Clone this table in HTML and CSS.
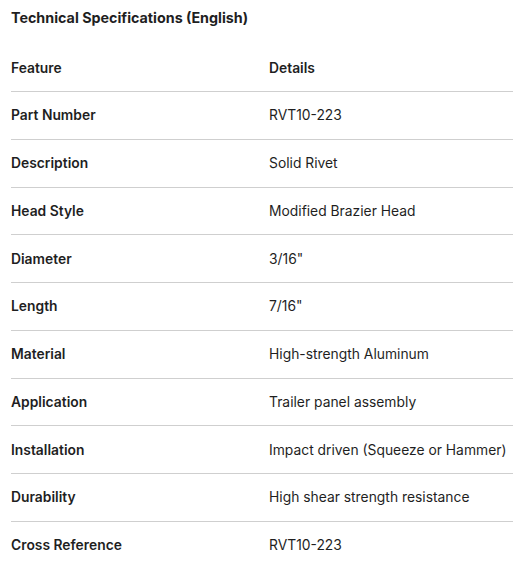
FILE: index.html
```html
<!DOCTYPE html>
<html lang="en">
<head>
<meta charset="utf-8">
<title>Technical Specifications</title>
<link rel="stylesheet" href="styles.css">
</head>
<body>
<div class="spec">
  <h2 class="spec-title">Technical Specifications (English)</h2>
  <table class="spec-table">
    <thead>
      <tr><th class="col-feature">Feature</th><th>Details</th></tr>
    </thead>
    <tbody>
      <tr><td class="feat">Part Number</td><td>RVT10-223</td></tr>
      <tr><td class="feat">Description</td><td>Solid Rivet</td></tr>
      <tr><td class="feat">Head Style</td><td>Modified Brazier Head</td></tr>
      <tr><td class="feat">Diameter</td><td>3/16"</td></tr>
      <tr><td class="feat">Length</td><td>7/16"</td></tr>
      <tr><td class="feat">Material</td><td>High-strength Aluminum</td></tr>
      <tr><td class="feat">Application</td><td>Trailer panel assembly</td></tr>
      <tr><td class="feat">Installation</td><td>Impact driven (Squeeze or Hammer)</td></tr>
      <tr><td class="feat">Durability</td><td>High shear strength resistance</td></tr>
      <tr><td class="feat">Cross Reference</td><td>RVT10-223</td></tr>
    </tbody>
  </table>
</div>
</body>
</html>
```
FILE: styles.css
```css
html, body {
  margin: 0;
  padding: 0;
  background: #ffffff;
}
body {
  font-family: Inter, "Noto Sans", "Liberation Sans", sans-serif;
  color: #1f1f1f;
}
.spec {
  padding: 8px 0 0 11px;
}
.spec-title {
  margin: 0 0 17px 0;
  font-size: 14.3px;
  line-height: 20px;
  font-weight: 650;
}
.spec-table {
  width: 502px;
  border-collapse: collapse;
  font-size: 13.85px;
}
.spec-table th,
.spec-table td {
  text-align: left;
  padding: 0;
  height: 46.75px;
  line-height: 20px;
  vertical-align: middle;
}
.spec-table thead th {
  height: 46px;
}
.spec-table thead tr {
  border-bottom: 1px solid #cfcfcf;
}
.spec-table tbody tr {
  border-bottom: 1px solid #cfcfcf;
}
.spec-table tbody tr:last-child {
  border-bottom: none;
}
.spec-table th {
  font-weight: 600;
}
.col-feature {
  width: 258px;
}
.feat {
  font-weight: 600;
}
```
